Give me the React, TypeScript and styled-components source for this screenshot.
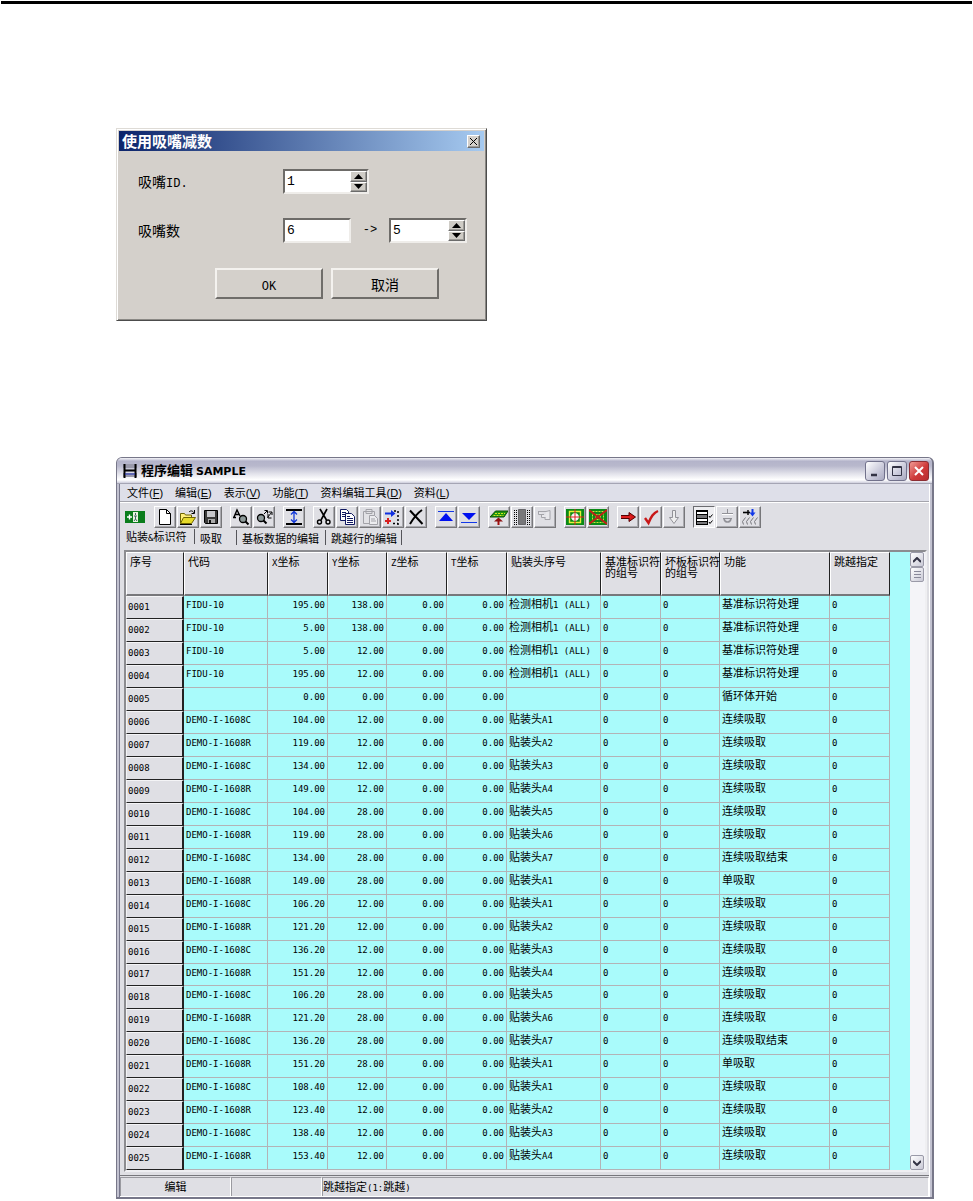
import React from 'react';
import styled, { createGlobalStyle, css } from 'styled-components';

const Global = createGlobalStyle`
  * { box-sizing: border-box; }
  body { margin: 0; background: #fff; color: #000; font-family: "Noto Sans CJK SC", sans-serif; }
  button, input { font: inherit; color: inherit; }
`;

const Page = styled.main`
  display: flex;
  flex-direction: column;
  padding: 0 39px 0 116px;
`;

const TopRule = styled.hr`
  margin: 1px -38px 124px -115px;
  border: 0;
  height: 3px;
  background: #000;
`;

const raised = css`
  border: 1px solid;
  border-color: #fff #6b6b6b #6b6b6b #fff;
  box-shadow: inset -1px -1px 0 #9c9a96;
`;

/* ---------- Dialog ---------- */
const Dialog = styled.section`
  width: 371px;
  max-width: 100%;
  height: 193px;
  padding: 2px;
  background: #d4d0cb;
  border: 1px solid;
  border-color: #dedbd6 #4c4c4c #4c4c4c #dedbd6;
  box-shadow: inset 1px 1px 0 #fff, inset -1px -1px 0 #8b8985;
  font-size: 14px;
  margin-bottom: 136px;
`;

const DialogTitle = styled.header`
  display: flex;
  align-items: center;
  justify-content: space-between;
  height: 20px;
  padding: 0 4px 0 3px;
  background: linear-gradient(90deg, #0c246a, #a6caf0);
  color: #fff;
`;

const DialogHeading = styled.h2`
  margin: 0;
  font-size: 15px;
  line-height: 20px;
  font-weight: 700;
`;

const DialogClose = styled.button`
  ${raised}
  display: grid;
  place-items: center;
  width: 13px;
  height: 13px;
  padding: 0;
  background: #d4d0cb;
`;

const Fields = styled.div`
  display: grid;
  grid-template-columns: 145px auto;
  row-gap: 24px;
  padding: 18px 0 0 19px;
  line-height: 25px;
`;

const FieldLabel = styled.label`
  height: 25px;
`;

const FieldSet = styled.div`
  display: flex;
  align-items: center;
`;

const MonoText = styled.span`
  font-family: "Liberation Mono", monospace;
  font-size: 12px;
`;

const Arrow = styled(MonoText)`
  width: 38px;
  text-align: center;
`;

const Box = styled.span<{ $w: number }>`
  display: flex;
  width: ${(p) => p.$w}px;
  height: 25px;
  background: #fff;
  border: 2px solid;
  border-color: #6d6b68 #efedea #efedea #6d6b68;
`;

const BoxInput = styled.input`
  flex: 1;
  min-width: 0;
  padding: 0 2px;
  border: 0;
  outline: 0;
  background: transparent;
  font-family: "Liberation Mono", monospace;
  font-size: 13px;
`;

const Spin = styled.span`
  display: flex;
  flex-direction: column;
  width: 17px;
`;

const SpinButton = styled.button`
  ${raised}
  display: grid;
  place-items: center;
  flex: 1;
  min-height: 0;
  padding: 0;
  background: #cfccc6;
`;

const Actions = styled.div`
  display: flex;
  gap: 8px;
  padding: 25px 0 0 96px;
`;

const ActionButton = styled.button`
  width: 108px;
  height: 31px;
  padding: 0;
  background: #d4d0cb;
  border: 2px solid;
  border-color: #f4f2ef #6f6d6a #6f6d6a #f4f2ef;
  font-size: 14px;
`;

/* ---------- Editor window ---------- */
const Window = styled.section`
  display: flex;
  flex-direction: column;
  border: 1px solid #777789;
  border-width: 1px 2px 2px 1px;
  border-radius: 6px 6px 0 0;
  padding: 0 2px;
  background: #c2c2d0;
  font-size: 11px;
  overflow: hidden;
`;

const TitleBar = styled.header`
  display: flex;
  align-items: center;
  gap: 3px;
  height: 26px;
  margin: 0 -2px;
  padding: 0 3px 0 5px;
  background: linear-gradient(#f4f4f8 0, #b4b4ca 12%, #b8b8cc 30%, #e4e4ec 62%, #fff 84%, #d8d8e4 94%, #8d8d9e 100%);
`;

const WindowTitle = styled.h1`
  flex: 1;
  margin: 0;
  font-size: 13px;
  line-height: 16px;
  font-weight: 700;
`;

const TitleLatin = styled.span`
  font-family: "DejaVu Sans", sans-serif;
  font-size: 11px;
`;

const WindowButtons = styled.div`
  display: flex;
  gap: 2px;
`;

const WindowButton = styled.button<{ $close?: boolean }>`
  display: grid;
  place-items: center;
  width: 20px;
  height: 20px;
  padding: 0;
  border: 1px solid ${(p) => (p.$close ? '#8c2d33' : '#72728c')};
  border-radius: 3px;
  background: ${(p) =>
    p.$close
      ? 'linear-gradient(135deg, #f09a94, #cf3a3a 55%, #b92c30)'
      : 'linear-gradient(135deg, #ffffff, #c9c9da 60%, #a9a9c0)'};
`;

const Client = styled.div`
  background: #dfdfe4;
  border-left: 1px solid #77778c;
  border-right: 1px solid #fff;
`;

const MenuBar = styled.nav`
  display: flex;
  gap: 12px;
  height: 18px;
  padding-left: 7px;
  background: #dedfe9;
  border-bottom: 1px solid #a4a4ac;
`;

const MenuItem = styled.button`
  padding: 0;
  border: 0;
  background: none;
  line-height: 16px;
  font-size: 11px;
  white-space: nowrap;
`;

const MenuLatin = styled.span`
  font-family: "Liberation Sans", sans-serif;
`;

const ToolBar = styled.div`
  display: flex;
  align-items: center;
  gap: 8px;
  height: 27px;
  padding: 1px 0 0 4px;
  border-top: 1px solid #fff;
`;

const ToolGroup = styled.div`
  display: flex;
  gap: 1px;
`;

const ToolButton = styled.button<{ $flat?: boolean; $pressed?: boolean }>`
  display: grid;
  place-items: center;
  width: 22px;
  height: 22px;
  padding: 0;
  border: 1px solid;
  border-color: #fff #77777a #77777a #fff;
  background: #dfdfe4;
  box-shadow: inset -1px -1px 0 #a9a9ae;
  ${(p) => p.$flat && css`border-color: transparent; box-shadow: none;`}
  ${(p) => p.$pressed && css`border-color: #6c6c70 #fff #fff #6c6c70; background: #eeeef1; box-shadow: none;`}
`;

const Tabs = styled.div`
  display: flex;
  height: 21px;
  padding-left: 6px;
`;

const Tab = styled.button<{ $w: number; $active?: boolean }>`
  width: ${(p) => p.$w}px;
  height: 15px;
  margin-top: ${(p) => (p.$active ? 0 : 1)}px;
  padding: 0 0 0 5px;
  border: 0;
  border-right: 1px solid #55555a;
  background: none;
  text-align: left;
  font-size: 11px;
  line-height: 14px;
  white-space: nowrap;
  ${(p) => p.$active && css`padding-left: 0;`}
`;

const GridFrame = styled.div`
  display: flex;
  margin: 0 2px 0 4px;
  border: 2px solid;
  border-color: #8c8c90 #efeff2 #efeff2 #8c8c90;
  background: #a9fbfb;
`;

const GridView = styled.div`
  flex: 1;
  min-width: 0;
  height: 618px;
  overflow: hidden;
`;

const Table = styled.table`
  table-layout: fixed;
  width: 764px;
  height: 639px;
  border-collapse: separate;
  border-spacing: 0;
  line-height: 13px;
`;

const HeadCell = styled.th`
  height: 44px;
  padding: 3px 0 0 3px;
  vertical-align: top;
  text-align: left;
  font-weight: 400;
  line-height: 11px;
  white-space: pre;
  background: #dfdfe4;
  border: solid;
  border-width: 1px 1px 2px 1px;
  border-color: #fff #222 #77777a #fff;
`;

const RowHead = styled.th`
  padding: 0 0 2px 1px;
  text-align: left;
  font-weight: 400;
  background: #dfdfe4;
  border: solid;
  border-width: 1px 2px 1px 1px;
  border-color: #f4f4f6 #222 #222 #f4f4f6;
`;

const Cell = styled.td<{ $right?: boolean }>`
  padding: 1px 2px 0;
  vertical-align: top;
  text-align: ${(p) => (p.$right ? 'right' : 'left')};
  white-space: nowrap;
  border-right: 1px solid #b3b3b6;
  border-bottom: 1px solid #b3b3b6;
`;

const Latin = styled.span`
  font-family: "DejaVu Sans Mono", monospace;
  font-size: 9px;
`;

const ScrollBar = styled.div`
  display: flex;
  flex-direction: column;
  width: 15px;
  background: #f4f4f8;
`;

const ScrollButton = styled.button`
  display: grid;
  place-items: center;
  width: 14px;
  height: 15px;
  padding: 0;
  border: 1px solid #9a9aa8;
  border-radius: 2px;
  background: linear-gradient(135deg, #fff, #c9c9d6);
`;

const ScrollTrack = styled.div`
  flex: 1;
`;

const StatusBar = styled.footer`
  display: flex;
  height: 22px;
  margin-top: 3px;
  border-top: 1px solid #77777c;
  line-height: 17px;
  border-bottom: 1px solid #fff;
`;

const StatusCell = styled.div<{ $w?: number; $center?: boolean }>`
  ${(p) => (p.$w ? css`width: ${p.$w}px;` : css`flex: 1;`)}
  margin-top: 1px;
  border-top: 1px solid #9a9aa0;
  border-left: 1px solid #9a9aa0;
  border-right: 1px solid #fff;
  text-align: ${(p) => (p.$center ? 'center' : 'left')};
`;

/* Latin runs are set in a narrow monospace beside the full-width characters. */
function Mixed({ text }: { text: string }) {
  return (
    <>
      {text.split(/([\x21-\x7e][\x20-\x7e]*)/).map((part, i) =>
        i % 2 ? <Latin key={i}>{part}</Latin> : part
      )}
    </>
  );
}

const S = ({ w = 18, h = 18, children }: { w?: number; h?: number; children: React.ReactNode }) => (
  <svg width={w} height={h} viewBox={`0 0 ${w} ${h}`} fill="none" stroke="#000" aria-hidden="true">
    {children}
  </svg>
);

const icons: Record<string, React.ReactNode> = {
  exit: <S w={20}><path d="M0 3h20v12H0z" fill="#0a7d1c" stroke="none" /><path d="M2 9h5M4.500 6.500v5" stroke="#fff" strokeWidth="1.400" /><path d="M8 4h5v10H8z" fill="#e8f5e0" stroke="none" /><path d="M10.500 5v2M9 8h3M10.500 8v3l-1.500 2M10.500 11l1.500 2" stroke="#466" /></S>,
  new: <S><path d="M3.500 1.500h7l4 4v11h-11z" fill="#fff" /><path d="M10.500 1.500v4h4" /></S>,
  open: <S><path d="M1.500 15.500v-10h4l1 1.500h6v3" fill="#ffef7a" stroke="#6e6400" /><path d="M1.500 15.500l3-6h12l-4 6z" fill="#e6da2a" stroke="#6e6400" /><path d="M1 16.500h12" /><path d="M10 4c2-2 4-1 5 1M15.500 2v3.500h-3" /></S>,
  save: <S><path d="M2.500 2.500h13v13h-12l-1-1z" fill="#3c3c3c" /><path d="M5 3h8v6H5z" fill="#c8c8cc" stroke="none" /><path d="M6 11h7v4H6z" fill="#aaa" stroke="none" /><path d="M7 12h2v3H7z" fill="#111" stroke="none" /></S>,
  find: <S><path d="M2 9L5 2l3 6M3 6.500h4M1 9.500h3" strokeWidth="1.400" /><circle cx="11" cy="11" r="3.500" fill="#8d9a9a" strokeWidth="1.300" /><path d="M13.500 13.500l3 3" strokeWidth="2" /></S>,
  replace: <S><circle cx="6" cy="10" r="3.500" fill="#8d9a9a" strokeWidth="1.300" /><path d="M8.500 12.500l3 3" strokeWidth="2" /><path d="M9 6l3-3M9.500 2.500h3v3M12.500 9.500l4-5M13 6v4h3.500M13.500 4h3.500v3" /></S>,
  height: <S><path d="M1 2h16M1 16h16" strokeWidth="2" /><path d="M9 4v10M6 6.500L9 3.500 12 6.500M6 11.500l3 3 3-3" stroke="#1238d8" strokeWidth="1.300" /></S>,
  cut: <S><path d="M5 1l6.500 11M12 1L6 12" strokeWidth="1.600" /><circle cx="4.500" cy="14" r="2" strokeWidth="1.400" /><circle cx="13" cy="14" r="2" strokeWidth="1.400" /></S>,
  copy: <S><path d="M2.500 1.500h6l2 2v9h-8z" fill="#fff" stroke="#101860" /><path d="M4 4.500h4M4 6.500h3M4 8.500h3" stroke="#101860" /><path d="M7.500 5.500h6l3 3v8h-9z" fill="#fff" stroke="#101860" /><path d="M9 8.500h3M9 10.500h6M9 12.500h6M9 14.500h6" stroke="#101860" /></S>,
  paste: <S><path d="M2.500 3.500h11v12h-11zM5 1.500h6v4H5z" fill="#e2e2e6" stroke="#a2a2a8" /><path d="M8.500 7.500h5l3 3v6h-8z" fill="#ececef" stroke="#a2a2a8" /><path d="M10 11h4M10 13h5" stroke="#a2a2a8" /></S>,
  insert: <S><path d="M1 5.500h7" stroke="#1030e0" strokeWidth="2" /><path d="M7 2l4.500 3.500L7 9z" fill="#1030e0" stroke="none" /><path d="M1 13h6M4 10v6" stroke="#d82020" strokeWidth="2" /><path d="M14 3v14M10 3h4M9 15.500h5" strokeDasharray="2 2" strokeWidth="1.500" /></S>,
  remove: <S><path d="M3 2.500L15.500 16M15 2C9 6 6 11 3 16" strokeWidth="2" /></S>,
  top: <S><path d="M1 3.500h16" stroke="#1238e8" /><path d="M9 5l7 8H2z" fill="#0010f0" stroke="none" /></S>,
  bottom: <S><path d="M2 5h14l-7 7z" fill="#0010f0" stroke="none" /><path d="M1 14.500h16" stroke="#1238e8" /></S>,
  board: <S><path d="M0 9l5.500-6h12.500l-4 6z" fill="#1e9612" stroke="#0b4d08" /><path d="M5 5.500h10M3.500 7.500h10" stroke="#d4e61e" strokeDasharray="2 1" /><path d="M8.500 17v-5" stroke="#a01010" strokeWidth="2" /><path d="M4 13.500l4.500-4 4.500 4z" fill="#8c1010" stroke="none" /></S>,
  chip: <S><path d="M5.500 1.500h7v15h-7z" fill="#77777a" stroke="#66666a" /><path d="M1.500 2v15M3.500 2v15M14.500 2v15M16.500 2v15" strokeDasharray="1 1" /></S>,
  hand: <S><path d="M2 3.500h8M2.500 3.500v3h5M8 6.500H5.500v3h4M10 3.500l4-1v9h-5v-2" fill="#e8e8ec" stroke="#a4a4aa" /></S>,
  target: <S><path d="M0 1h18v16H0z" fill="#0a8a16" stroke="none" /><path d="M3.500 3.500h11v11h-11z" stroke="#e8ef3a" strokeWidth="1.400" /><circle cx="9" cy="9" r="3.500" fill="#fff" stroke="#eee" /><path d="M0 9h18M9 1v16" stroke="#e02020" /></S>,
  untarget: <S><path d="M0 1h18v16H0z" fill="#0a8a16" stroke="none" /><path d="M3.500 3.500h11v11h-11zM6.500 6.500h5v5h-5z" stroke="#c8e03a" strokeDasharray="2 1" /><path d="M0 2l18 14M18 2L0 16" stroke="#c02018" strokeWidth="1.800" /></S>,
  right: <S><path d="M2 9h9" stroke="#500" strokeWidth="4" /><path d="M10 4.500L16.500 9 10 13.500z" fill="#d81818" stroke="#500" /><path d="M2 9h10" stroke="#e02020" strokeWidth="2" /></S>,
  check: <S><path d="M3 10l3.500 5C9 9 11 5 16 3" stroke="#c81818" strokeWidth="2.400" /></S>,
  down: <S><path d="M7.500 2.500h3v7h3l-4.500 6-4.500-6h3z" fill="#eee" stroke="#929298" /></S>,
  list: <S><path d="M1 2h12v15H1z" fill="#000" stroke="none" /><path d="M2 4h10v2H2z" fill="#fff" stroke="none" /><path d="M2 7h10v3H2z" fill="#77777a" stroke="none" /><path d="M2 11h10v2H2z" fill="#fff" stroke="none" /><path d="M2 14h10v2H2z" fill="#77777a" stroke="none" /><path d="M14 8l1 1.500 2.500-3M14 14l1 1.500 2.500-3" /></S>,
  pick: <S><path d="M9.500 1v4M4 5.500h11M5 10.500h9" stroke="#929298" /><path d="M6 11c1 4 6 4 7 0" stroke="#929298" strokeWidth="1.600" /><path d="M4 6.500h11" stroke="#fff" /></S>,
  feeder: <S><path d="M2 4.500h7" strokeWidth="1.600" /><path d="M7 2v5" strokeWidth="1.400" /><path d="M11.500 1v5" stroke="#1238e8" strokeWidth="2" /><path d="M8.500 4.500h6l-3 4z" fill="#1238e8" stroke="none" /><path d="M4.500 9.500l-3 4 1 3M8.500 9.500l-3 4 1 3M12.500 9.500l-3 4 1 3M16.500 9.500l-3 4 1 3" stroke="#77777c" /></S>,
};

const groups: [string, string][][] = [
  [['exit', '退出']],
  [['new', '新建'], ['open', '打开'], ['save', '保存']],
  [['find', '查找'], ['replace', '替换']],
  [['height', '行高']],
  [['cut', '剪切'], ['copy', '复制'], ['paste', '粘贴'], ['insert', '插入'], ['remove', '删除']],
  [['top', '首行'], ['bottom', '末行']],
  [['board', '基板'], ['chip', '元件'], ['hand', '示教']],
  [['target', '标识符'], ['untarget', '取消标识符']],
  [['right', '执行'], ['check', '检查'], ['down', '向下']],
  [['list', '列表'], ['pick', '吸取'], ['feeder', '供料器']],
];

const menus: [string, string][] = [
  ['文件', 'F'], ['编辑', 'E'], ['表示', 'V'], ['功能', 'T'], ['资料编辑工具', 'D'], ['资料', 'L'],
];

const tabs: [string, number][] = [
  ['贴装&标识符', 69], ['吸取', 42], ['基板数据的编辑', 89], ['跳越行的编辑', 76],
];

const columns: [string, number][] = [
  ['序号', 58], ['代码', 84], ['X坐标', 60], ['Y坐标', 59], ['Z坐标', 60], ['T坐标', 60],
  ['贴装头序号', 94], ['基准标识符\n的组号', 60], ['坏板标识符\n的组号', 59], ['功能', 110], ['跳越指定', 60],
];

const fiducials = [['195.00', '138.00'], ['5.00', '138.00'], ['5.00', '12.00'], ['195.00', '12.00']];
const bases: [number, string][] = [
  [104, '12.00'], [119, '12.00'], [134, '12.00'], [149, '12.00'], [104, '28.00'], [119, '28.00'], [134, '28.00'], [149, '28.00'],
];
const placement = (n: number): string[] => {
  const [x, y] = bases[n % 8];
  const shift = Math.floor(n / 8) * 2.2;
  const head = n % 8 === 7 ? 'A1' : `A${(n % 8) + 1}`;
  const action = n % 8 === 6 ? '连续吸取结束' : n % 8 === 7 ? '单吸取' : '连续吸取';
  return [`DEMO-I-1608${n % 2 ? 'R' : 'C'}`, (x + shift).toFixed(2), y, '0.00', '0.00', `贴装头${head}`, '0', '0', action, '0'];
};

const rows: string[][] = [
  ...fiducials.map(([x, y]) => ['FIDU-10', x, y, '0.00', '0.00', '检测相机1 (ALL)', '0', '0', '基准标识符处理', '0']),
  ['', '0.00', '0.00', '0.00', '0.00', '', '0', '0', '循环体开始', '0'],
  ...Array.from({ length: 20 }, (_, n) => placement(n)),
];

function SpinBox({ id, value, w, label }: { id: string; value: string; w: number; label?: string }) {
  return (
    <Box $w={w}>
      <BoxInput id={id} defaultValue={value} aria-label={label} />
      <Spin>
        <SpinButton aria-label="增加"><svg width="9" height="5"><path d="M0 5l4.500-5L9 5z" /></svg></SpinButton>
        <SpinButton aria-label="减少"><svg width="9" height="5"><path d="M0 0l4.500 5L9 0z" /></svg></SpinButton>
      </Spin>
    </Box>
  );
}

function NozzleDialog() {
  return (
    <Dialog>
      <DialogTitle>
        <DialogHeading>使用吸嘴减数</DialogHeading>
        <DialogClose aria-label="关闭">
          <svg width="7" height="7" stroke="#000"><path d="M0 0l7 7M7 0L0 7" /></svg>
        </DialogClose>
      </DialogTitle>
      <Fields>
        <FieldLabel htmlFor="nozzle-id">吸嘴<MonoText>ID.</MonoText></FieldLabel>
        <FieldSet><SpinBox id="nozzle-id" value="1" w={86} /></FieldSet>
        <FieldLabel htmlFor="nozzle-from">吸嘴数</FieldLabel>
        <FieldSet>
          <Box $w={68}><BoxInput id="nozzle-from" defaultValue="6" /></Box>
          <Arrow>-&gt;</Arrow>
          <SpinBox id="nozzle-to" value="5" w={78} label="减少后的吸嘴数" />
        </FieldSet>
      </Fields>
      <Actions>
        <ActionButton><MonoText>OK</MonoText></ActionButton>
        <ActionButton>取消</ActionButton>
      </Actions>
    </Dialog>
  );
}

function Editor() {
  return (
    <Window>
      <TitleBar>
        <S w={16} h={16}><path d="M1 1h14v4H1zM1 10h14v4H1z" fill="#99a" stroke="none" /><path d="M2.500 1v14M13.500 1v14M3 7.500h10" strokeWidth="2" /><path d="M3 11h10" stroke="#23b" /></S>
        <WindowTitle>程序编辑 <TitleLatin>SAMPLE</TitleLatin></WindowTitle>
        <WindowButtons>
          <WindowButton aria-label="最小化"><S w={14} h={14}><path d="M3 11h6" stroke="#334" strokeWidth="2.500" /></S></WindowButton>
          <WindowButton aria-label="最大化"><S w={14} h={14}><path d="M2.500 2.500h9v9h-9zM2.500 3.500h9" stroke="#334" /></S></WindowButton>
          <WindowButton $close aria-label="关闭"><S w={14} h={14}><path d="M3 3l8 8M11 3l-8 8" stroke="#fff" strokeWidth="2" /></S></WindowButton>
        </WindowButtons>
      </TitleBar>
      <Client>
        <MenuBar>
          {menus.map(([name, key]) => (
            <MenuItem key={name}>{name}<MenuLatin>(<u>{key}</u>)</MenuLatin></MenuItem>
          ))}
        </MenuBar>
        <ToolBar>
          {groups.map((group, g) => (
            <ToolGroup key={g}>
              {group.map(([icon, label]) => (
                <ToolButton key={icon} aria-label={label} $flat={icon === 'exit'} $pressed={icon === 'list'}>
                  {icons[icon]}
                </ToolButton>
              ))}
            </ToolGroup>
          ))}
        </ToolBar>
        <Tabs>
          {tabs.map(([name, w], i) => (
            <Tab key={name} $w={w} $active={i === 0}><Mixed text={name} /></Tab>
          ))}
        </Tabs>
        <GridFrame>
          <GridView>
            <Table>
              <colgroup>{columns.map(([name, w]) => <col key={name} width={w} />)}</colgroup>
              <thead>
                <tr>{columns.map(([name]) => <HeadCell key={name} scope="col"><Mixed text={name} /></HeadCell>)}</tr>
              </thead>
              <tbody>
                {rows.map((row, r) => (
                  <tr key={r}>
                    <RowHead scope="row"><Mixed text={String(r + 1).padStart(4, '0')} /></RowHead>
                    {row.map((value, c) => (
                      <Cell key={c} $right={c > 0 && c < 5}><Mixed text={value} /></Cell>
                    ))}
                  </tr>
                ))}
                <tr>
                  <RowHead>&nbsp;</RowHead>
                  {columns.slice(1).map(([name]) => <Cell key={name}>&nbsp;</Cell>)}
                </tr>
              </tbody>
            </Table>
          </GridView>
          <ScrollBar>
            <ScrollButton aria-label="向上滚动"><svg width="8" height="6" fill="none" stroke="#334" strokeWidth="2"><path d="M0 5l4-4 4 4" /></svg></ScrollButton>
            <ScrollButton aria-label="滑块"><svg width="7" height="7" stroke="#889"><path d="M0 .5h7M0 3.500h7M0 6.500h7" /></svg></ScrollButton>
            <ScrollTrack />
            <ScrollButton aria-label="向下滚动"><svg width="8" height="6" fill="none" stroke="#334" strokeWidth="2"><path d="M0 1l4 4 4-4" /></svg></ScrollButton>
          </ScrollBar>
        </GridFrame>
        <StatusBar>
          <StatusCell $w={111} $center>编辑</StatusCell>
          <StatusCell $w={91} />
          <StatusCell><Mixed text="跳越指定(1:跳越)" /></StatusCell>
        </StatusBar>
      </Client>
    </Window>
  );
}

export default function App() {
  return (
    <>
      <Global />
      <Page>
        <TopRule />
        <NozzleDialog />
        <Editor />
      </Page>
    </>
  );
}
